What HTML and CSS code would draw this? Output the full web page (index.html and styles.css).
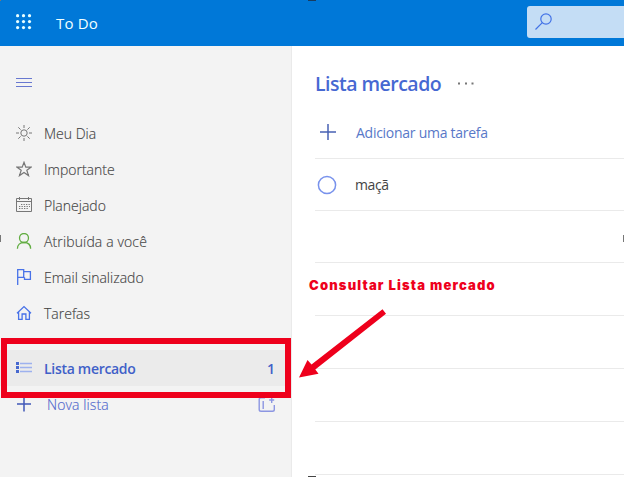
FILE: index.html
```html
<!DOCTYPE html>
<html lang="pt-BR">
<head>
<meta charset="utf-8">
<title>To Do</title>
<link rel="stylesheet" href="styles.css">
</head>
<body>
<div class="app">
  <header class="topbar">
    <svg class="waffle" width="16" height="16" viewBox="0 0 16 16" fill="#e8ffff">
      <circle cx="1.6" cy="1.7" r="1.6"/><circle cx="7.5" cy="1.7" r="1.6"/><circle cx="13.5" cy="1.7" r="1.6"/>
      <circle cx="1.6" cy="7.6" r="1.6"/><circle cx="7.5" cy="7.6" r="1.6"/><circle cx="13.5" cy="7.6" r="1.6"/>
      <circle cx="1.6" cy="13.6" r="1.6"/><circle cx="7.5" cy="13.6" r="1.6"/><circle cx="13.5" cy="13.6" r="1.6"/>
    </svg>
    <span class="brand">To Do</span>
    <div class="search">
      <svg width="18" height="18" viewBox="0 0 18 18" fill="none" stroke="#4272e6" stroke-width="1.2"><circle cx="11" cy="6" r="5.2"/><path d="M7.3 9.7L.5 16.5"/></svg>
    </div>
  </header>
  <div class="body">
    <aside class="sidebar">
      <svg class="burger" width="16" height="10" viewBox="0 0 16 10" stroke="#6878d0"><path d="M0 .5h16M0 4.5h16M0 8.5h16"/></svg>
      <nav class="nav">
        <a class="item"><svg class="icon" viewBox="0 0 16 16" fill="none" stroke="#777"><circle cx="8" cy="8" r="3.2"/><path d="M8 0v3M8 13v3M0 8h3M13 8h3M2.3 2.3l2.3 2.3M11.4 11.4l2.3 2.3M2.3 13.7l2.3-2.3M11.4 4.6l2.3-2.3"/></svg><span>Meu Dia</span></a>
        <a class="item"><svg class="icon" viewBox="0 0 16 16" fill="none" stroke="#777" stroke-width="1.2"><path d="M8 1.3l1.8 4.9h5.2l-4.2 3.1 1.7 5.3L8 11.4l-4.5 3.2 1.7-5.3L1 6.2h5.2z"/></svg><span>Importante</span></a>
        <a class="item"><svg class="icon" viewBox="0 0 16 16" fill="none" stroke="#777"><path d="M.5 1.5h15v13H.5zM.5 4.500h15M3.5 0v3M12.500 0v3"/><path d="M5 7.500h9M3 9.500h11M3 11.500h9" stroke-dasharray="1.300 1.200"/></svg><span>Planejado</span></a>
        <a class="item"><svg class="icon" viewBox="0 0 16 16" fill="none" stroke="#62ad42" stroke-width="1.3"><circle cx="8" cy="5" r="4.5"/><path d="M1.4 15.8C1.4 11.8 4 9.5 8 9.5s6.6 2.3 6.6 6.3"/></svg><span class="t-assign">Atribuída a você</span></a>
        <a class="item"><svg class="icon" viewBox="0 0 16 16" fill="none" stroke="#4872e8" stroke-width="1.3"><path d="M1.7 16V.7h6v7.6h-6M7.700 2.600h6.700v7.700H8.500V8.300"/></svg><span>Email sinalizado</span></a>
        <a class="item"><svg class="icon" viewBox="0 0 16 16" fill="none" stroke="#4872e8" stroke-width="1.3"><path d="M1 8.300L8 1.600l7 6.700M2.600 7v7.400h3.500V9h3.800v5.400h3.500V7"/></svg><span>Tarefas</span></a>
      </nav>
      <a class="item selected"><svg class="icon" viewBox="0 0 16 16"><path d="M4 3.500h12M4 7.500h12M4 11.500h12" stroke="#9db1ee" stroke-width="1.4"/><path d="M0 2h3v3H0zM0 6h3v3H0zM0 10h3v3H0z" fill="#4668cf"/></svg><span class="t-list">Lista mercado</span><span class="count">1</span></a>
      <a class="item new"><svg class="icon" viewBox="0 0 16 16" stroke="#4058b8" stroke-width="1.5"><path d="M8 .5v15M1 8h14"/></svg><span class="t-new">Nova lista</span>
        <svg class="group" width="18" height="17" viewBox="0 0 18 17" fill="none" stroke="#8c96e2" stroke-width="1.400"><path d="M7 1.700H3Q1.200 1.700 1.200 3.500v10Q1.200 15.300 3 15.300h11.500q1.800 0 1.800-1.800V9M5.200 5v8M13.700 1v6M11.200 4h5"/></svg></a>
    </aside>
    <main class="main">
      <div class="heading"><h1>Lista mercado</h1><svg width="16" height="3" viewBox="0 0 16 3" fill="#777"><path d="M0 .5h2v2H0zM7 .5h2v2H7zM13.500 .5h2v2h-2z"/></svg></div>
      <div class="row add"><svg width="18" height="18" viewBox="0 0 18 18" stroke="#4862b4" stroke-width="1.5"><path d="M9 1v16M1 9h16"/></svg><span class="t-add">Adicionar uma tarefa</span></div>
      <div class="row"><svg width="20" height="20" viewBox="0 0 20 20" fill="none" stroke="#7892ec" stroke-width="1.5"><circle cx="10" cy="10" r="8.600"/></svg><span class="t-apple">maçã</span></div>
      <div class="row"></div><div class="row tall"></div><div class="row tall"></div><div class="row tall"></div><div class="row tall"></div>
    </main>
  </div>
  <div class="highlight"></div>
  <div class="note">Consultar Lista mercado</div>
  <svg class="arrow" width="90" height="72" viewBox="0 0 90 72" fill="#ee001c"><path d="M1 69.500L9.500 52l4 4.500L84.500 1.300l3.500 4.400-70.700 55.800 3.200 4.200z"/></svg>
  <i class="handle top"></i><i class="handle bottom"></i><i class="handle left"></i><i class="handle right"></i><i class="handle corner"></i>
</div>
</body>
</html>
```
FILE: styles.css
```css
* { box-sizing: border-box; }
body { margin: 0; font-family: "Open Sans", "Noto Sans", sans-serif; font-size: 14px; color: #444; }
.app { position: relative; width: 624px; height: 477px; overflow: hidden; background: #fff; }
.topbar { display: flex; align-items: center; height: 46px; padding-left: 16px; background: #0078d8; }
.waffle { display: block; margin-bottom: 3px; }
.brand { margin: 0 0 1px 24px; font-size: 15px; letter-spacing: .2px; color: #f0ffff; white-space: nowrap; }
.search { display: flex; align-items: center; width: 97px; height: 32px; margin: 0 0 2px auto; padding-left: 8px; border-radius: 3px 0 0 3px; background: #c4ddf5; }
.body { display: flex; height: 431px; }
.sidebar { display: flex; flex-direction: column; width: 292px; flex: none; background: #f3f3f3; border-right: 1px solid #eaeaea; padding-top: 32px; }
.burger { display: block; margin-left: 16px; }
.nav { margin: 27px 0 19px; }
.item { display: flex; align-items: center; height: 36px; padding-left: 16px; white-space: nowrap; font-weight: 300; }
.nav .item { -webkit-text-stroke: .15px #444; }
.icon { width: 16px; height: 16px; flex: none; margin-right: 12px; }
.t-assign { letter-spacing: .13px; }
.selected { width: 285px; background: #ebebeb; color: #4060c8; font-weight: 600; }
.t-list { letter-spacing: -.3px; }
.count { margin-left: auto; padding-right: 10px; }
.new { color: #5268cc; -webkit-text-stroke: .15px #5268cc; }
.new .icon { margin-right: 15px; }
.t-new { letter-spacing: .1px; }
.group { margin: 0 15px 0 auto; }
.main { flex: 1; padding: 19px 0 0 23px; }
.heading { display: flex; align-items: center; height: 37px; gap: 17px; padding-bottom: 1px; }
h1 { margin: 0; font-size: 19.5px; font-weight: 600; letter-spacing: -.52px; color: #4668d2; white-space: nowrap; }
.row { display: flex; align-items: center; height: 52px; border-bottom: 1px solid #eaeaea; }
.row.add { height: 57px; padding: 4px 0 0 4px; gap: 19px; color: #5878c8; }
.t-add { letter-spacing: -.27px; }
.row svg { flex: none; }
.row:nth-child(3) { gap: 18px; padding-left: 2px; }
.t-apple { letter-spacing: -.4px; }
.row.tall { height: 53px; }
.highlight { position: absolute; left: 1px; top: 338px; width: 290px; height: 60px; border: 6px solid #ee001c; }
.note { position: absolute; left: 309px; top: 276px; font: 900 13px/18px Inter, sans-serif; letter-spacing: 1.18px; color: #ee001c; white-space: nowrap; }
.arrow { position: absolute; left: 298px; top: 308px; }
.handle { position: absolute; background: #777; }
.handle.top { left: 308px; top: 0; width: 8px; height: 1px; background: #183c60; }
.handle.bottom { left: 308px; top: 476px; width: 8px; height: 1px; background: #444; }
.handle.left { left: 0; top: 235px; width: 1px; height: 7px; }
.handle.right { left: 623px; top: 235px; width: 1px; height: 7px; }
.handle.corner { left: 0; top: 0; width: 1px; height: 1px; }
```
